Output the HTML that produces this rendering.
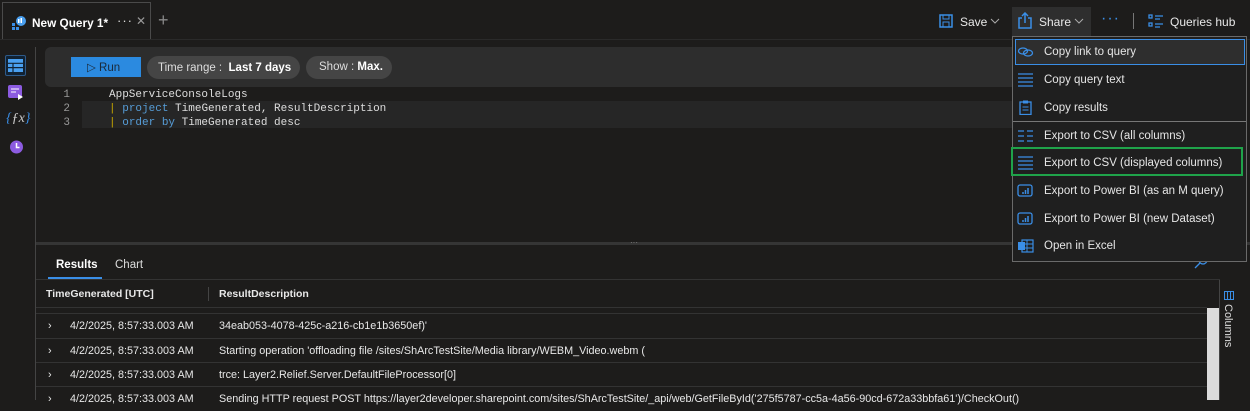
<!DOCTYPE html>
<html><head><meta charset="utf-8"><style>
*{box-sizing:border-box;margin:0;padding:0}
body{width:1250px;height:400px;overflow:hidden;background:#1d1c1b;font-family:"Liberation Sans",sans-serif;color:#e8e8e8;font-size:12px;position:relative}
.a{position:absolute}
.mono{font-family:"Liberation Mono",monospace;font-size:11px}
.mi{position:absolute;left:1014px;width:231px;height:27px;display:flex;align-items:center;font-size:11.5px;color:#e6e6e6}
.mi svg{margin-left:3px;margin-right:9px}
.row{position:absolute;left:36px;width:1171px;height:25px;border-top:1px solid #333;font-size:10.8px}
.row span{position:absolute;top:6px}
</style></head><body>
<!-- tab -->
<div class="a" style="left:2px;top:2px;width:149px;height:37px;border:1px solid #4a4a4a;border-bottom:none;background:#1d1c1b"></div>
<svg class="a" style="left:11px;top:15px" width="16" height="16" viewBox="0 0 16 16"><rect x="1" y="8" width="3" height="3" fill="#3a8ee6"/><rect x="1" y="12" width="3" height="3" fill="#3a8ee6"/><rect x="5" y="12" width="3" height="3" fill="#3a8ee6"/><circle cx="10" cy="6" r="5" fill="#4aa0f0"/><rect x="7" y="4" width="1.5" height="4" fill="#fff"/><rect x="9.5" y="3" width="1.5" height="5" fill="#fff"/></svg>
<div class="a" style="left:32px;top:16px;font-weight:bold;font-size:11.8px;color:#fff">New Query 1*</div>
<div class="a" style="left:117px;top:13px;font-size:13px;color:#ddd;letter-spacing:1px">···</div>
<div class="a" style="left:136px;top:14px;font-size:12px;color:#999">✕</div>
<div class="a" style="left:158px;top:10px;font-size:18px;color:#888">+</div>
<!-- top right -->
<svg class="a" style="left:939px;top:14px" width="14" height="14" viewBox="0 0 14 14"><rect x="1" y="1" width="12" height="12" fill="none" stroke="#3a8ee6" stroke-width="1.5"/><rect x="4" y="1" width="6" height="4" fill="none" stroke="#3a8ee6"/><rect x="4" y="8" width="6" height="5" fill="none" stroke="#3a8ee6"/></svg>
<div class="a" style="left:960px;top:15px">Save</div>
<svg class="a" style="left:990px;top:18px" width="10" height="6" viewBox="0 0 10 6"><path d="M1 1l4 4 4-4" fill="none" stroke="#aaa"/></svg>
<div class="a" style="left:1012px;top:7px;width:79px;height:29px;background:#2e2e2e"></div>
<svg class="a" style="left:1018px;top:12px" width="14" height="17" viewBox="0 0 14 17"><path d="M4 6H1v10h12V6h-3" fill="none" stroke="#3a8ee6" stroke-width="1.5"/><path d="M7 11V1M4 4l3-3 3 3" fill="none" stroke="#3a8ee6" stroke-width="1.5"/></svg>
<div class="a" style="left:1039px;top:15px">Share</div>
<svg class="a" style="left:1074px;top:18px" width="10" height="6" viewBox="0 0 10 6"><path d="M1 1l4 4 4-4" fill="none" stroke="#aaa"/></svg>
<div class="a" style="left:1101px;top:10px;color:#3a8ee6;font-size:16px;letter-spacing:1px">···</div>
<div class="a" style="left:1133px;top:13px;width:1px;height:16px;background:#777"></div>
<svg class="a" style="left:1148px;top:14px" width="16" height="14" viewBox="0 0 16 14"><g fill="none" stroke="#3a8ee6" stroke-width="1.3"><rect x="1" y="1" width="3" height="3"/><rect x="1" y="9" width="3" height="3"/><path d="M7 2h8M7 5h5M7 10h8M7 13h5"/></g></svg>
<div class="a" style="left:1170px;top:15px">Queries hub</div>
<div class="a" style="left:0;top:39px;width:1250px;height:1px;background:#2a2a2a"></div>
<!-- left sidebar -->
<div class="a" style="left:35px;top:47px;width:1px;height:353px;background:#444"></div>
<div class="a" style="left:5px;top:55px;width:21px;height:21px;border:1px solid #2d5a8a;border-radius:2px;background:#123"></div>
<svg class="a" style="left:8px;top:59px" width="15" height="13" viewBox="0 0 15 13"><rect width="15" height="13" fill="#4aa0f0"/><path d="M0 4.3h15M0 8.6h15M5 4v9" stroke="#123" stroke-width="1.2"/></svg>
<svg class="a" style="left:8px;top:85px" width="16" height="15" viewBox="0 0 16 15"><rect x="0" y="0" width="14" height="13" rx="2" fill="#8c5be0"/><path d="M3 4h8M3 7h5" stroke="#fff"/><path d="M10 9l5 3-5 3z" fill="#fff"/></svg>
<div class="a" style="left:6px;top:111px;font-family:'Liberation Serif',serif;font-style:italic;font-size:14px;color:#3a8ee6">{<span style="color:#ccc">ƒx</span>}</div>
<svg class="a" style="left:8px;top:139px" width="16" height="16" viewBox="0 0 16 16"><circle cx="8.5" cy="8" r="6.5" fill="#8c5be0"/><path d="M8.5 4v4.5h3" stroke="#fff" stroke-width="1.5" fill="none"/></svg>
<!-- toolbar -->
<div class="a" style="left:45px;top:47px;width:1000px;height:40px;background:#2d2d2d;border-radius:6px 0 0 6px"></div>
<div class="a" style="left:71px;top:57px;width:70px;height:20px;background:#2b8ae0"></div>
<div class="a" style="left:87px;top:60px;color:#1b2a3a;font-size:11.5px">▷ Run</div>
<div class="a" style="left:147px;top:56px;width:153px;height:23px;background:#454545;border-radius:12px"></div>
<div class="a" style="left:158px;top:62px;color:#ddd;font-size:11.5px">Time range :&nbsp; <b style="color:#fff">Last 7 days</b></div>
<div class="a" style="left:306px;top:56px;width:86px;height:23px;background:#454545;border-radius:12px"></div>
<div class="a" style="left:319px;top:61px;color:#ddd;font-size:11.5px">Show : <b style="color:#fff">Max.</b></div>
<!-- code -->
<div class="a" style="left:82px;top:101px;width:930px;height:27px;background:#262626"></div>
<div class="a mono" style="left:60px;top:88px;color:#999;line-height:14px;text-align:right;width:10px">1<br>2<br>3</div>
<div class="a mono" style="left:109px;top:88px;line-height:14px;color:#ddd;white-space:pre">AppServiceConsoleLogs
<span style="color:#c8a800">|</span> <span style="color:#569cd6">project</span> TimeGenerated, ResultDescription
<span style="color:#c8a800">|</span> <span style="color:#569cd6">order by</span> TimeGenerated desc</div>
<!-- splitter -->
<div class="a" style="left:36px;top:242px;width:1214px;height:3px;background:#353535"></div>
<div class="a" style="left:630px;top:238px;color:#888;font-size:8px">···</div>
<!-- results tabs -->
<div class="a" style="left:56px;top:259px;color:#fff;font-weight:bold;font-size:11.5px">Results</div>
<div class="a" style="left:115px;top:259px;color:#ddd;font-size:11.5px">Chart</div>
<div class="a" style="left:48px;top:277px;width:54px;height:2px;background:#3a8ee6"></div>
<div class="a" style="left:36px;top:279px;width:1184px;height:1px;background:#333"></div>
<svg class="a" style="left:1194px;top:255px" width="14" height="14" viewBox="0 0 14 14"><circle cx="9" cy="5" r="4" fill="none" stroke="#3a8ee6" stroke-width="1.3"/><path d="M6 8L1 13" stroke="#3a8ee6" stroke-width="1.3"/></svg>
<div class="a" style="left:46px;top:288px;font-weight:bold;font-size:10.5px">TimeGenerated [UTC]</div>
<div class="a" style="left:208px;top:287px;width:1px;height:14px;background:#444"></div>
<div class="a" style="left:219px;top:288px;font-weight:bold;font-size:10.5px">ResultDescription</div>
<div class="a" style="left:36px;top:307px;width:1171px;height:1px;background:#333"></div>
<div class="row" style="top:313px"><span style="left:12px">›</span><span style="left:34px">4/2/2025, 8:57:33.003 AM</span><span style="left:183px">34eab053-4078-425c-a216-cb1e1b3650ef)'</span></div>
<div class="row" style="top:338px"><span style="left:12px">›</span><span style="left:34px">4/2/2025, 8:57:33.003 AM</span><span style="left:183px">Starting operation 'offloading file /sites/ShArcTestSite/Media library/WEBM_Video.webm (</span></div>
<div class="row" style="top:362px"><span style="left:12px">›</span><span style="left:34px">4/2/2025, 8:57:33.003 AM</span><span style="left:183px">trce: Layer2.Relief.Server.DefaultFileProcessor[0]</span></div>
<div class="row" style="top:386px"><span style="left:12px">›</span><span style="left:34px">4/2/2025, 8:57:33.003 AM</span><span style="left:183px">Sending HTTP request POST https://layer2developer.sharepoint.com/sites/ShArcTestSite/_api/web/GetFileById('275f5787-cc5a-4a56-90cd-672a33bbfa61')/CheckOut()</span></div>
<div class="a" style="left:1207px;top:308px;width:12px;height:92px;background:#dcdcdc"></div>
<div class="a" style="left:1219px;top:280px;width:1px;height:120px;background:#444"></div>
<svg class="a" style="left:1224px;top:291px" width="10" height="9" viewBox="0 0 10 9"><rect x="0.5" y="0.5" width="9" height="8" fill="none" stroke="#3a8ee6"/><path d="M3.5 0v9M6.5 0v9" stroke="#3a8ee6"/></svg>
<div class="a" style="left:1222px;top:304px;writing-mode:vertical-rl;font-size:11px;color:#ddd">Columns</div>
<!-- menu -->
<div class="a" style="left:1012px;top:36px;width:235px;height:226px;background:#1f1f1f;border:1px solid #6a6a6a"></div>
<div class="a" style="left:1015px;top:39px;width:230px;height:26px;background:#2e2e2e;border:1px solid #3a8ee6"></div>
<div class="mi" style="top:38px"><svg width="18" height="14" viewBox="0 0 18 14"><g fill="none" stroke="#3a8ee6" stroke-width="1.3"><ellipse cx="6" cy="6" rx="4.5" ry="3"/><ellipse cx="11" cy="8" rx="4.5" ry="3"/></g></svg>Copy link to query</div>
<div class="mi" style="top:66px"><svg width="18" height="14" viewBox="0 0 18 14"><path d="M1 1h15M1 5h15M1 9h15M1 13h15" stroke="#3a8ee6" stroke-width="1.3"/></svg>Copy query text</div>
<div class="mi" style="top:94px"><svg width="18" height="15" viewBox="0 0 18 15"><rect x="3" y="2" width="11" height="12.5" fill="none" stroke="#3a8ee6" stroke-width="1.3"/><rect x="6" y="0.5" width="5" height="3" fill="#3a8ee6"/><path d="M5.5 7h6M5.5 10h6" stroke="#3a8ee6"/></svg>Copy results</div>
<div class="a" style="left:1013px;top:121px;width:233px;height:1px;background:#777"></div>
<div class="mi" style="top:122px"><svg width="18" height="14" viewBox="0 0 18 14"><path d="M1 2h6M10 2h6M1 7h6M10 7h6M1 12h6M10 12h6" stroke="#3a8ee6" stroke-width="1.3"/></svg>Export to CSV (all columns)</div>
<div class="a" style="left:1011px;top:147px;width:232px;height:29px;border:2px solid #1fa34a"></div>
<div class="mi" style="top:149px"><svg width="18" height="14" viewBox="0 0 18 14"><path d="M1 1h15M1 5h15M1 9h15M1 13h15" stroke="#3a8ee6" stroke-width="1.3"/></svg>Export to CSV (displayed columns)</div>
<div class="mi" style="top:177px"><svg width="18" height="14" viewBox="0 0 18 14"><rect x="1" y="1" width="14" height="11" rx="2" fill="none" stroke="#3a8ee6" stroke-width="1.3"/><path d="M6 10V8M8.5 10V6M11 10V4" stroke="#3a8ee6" stroke-width="1.5"/></svg>Export to Power BI (as an M query)</div>
<div class="mi" style="top:205px"><svg width="18" height="14" viewBox="0 0 18 14"><rect x="1" y="1" width="14" height="11" rx="2" fill="none" stroke="#3a8ee6" stroke-width="1.3"/><path d="M6 10V8M8.5 10V6M11 10V4" stroke="#3a8ee6" stroke-width="1.5"/></svg>Export to Power BI (new Dataset)</div>
<div class="mi" style="top:232px"><svg width="18" height="14" viewBox="0 0 18 14"><rect x="5" y="1" width="11" height="12" fill="none" stroke="#3a8ee6" stroke-width="1.2"/><path d="M5 5h11M5 9h11M10 1v12" stroke="#3a8ee6"/><rect x="1" y="3" width="7" height="8" fill="#3a8ee6"/></svg>Open in Excel</div>
</body></html>
